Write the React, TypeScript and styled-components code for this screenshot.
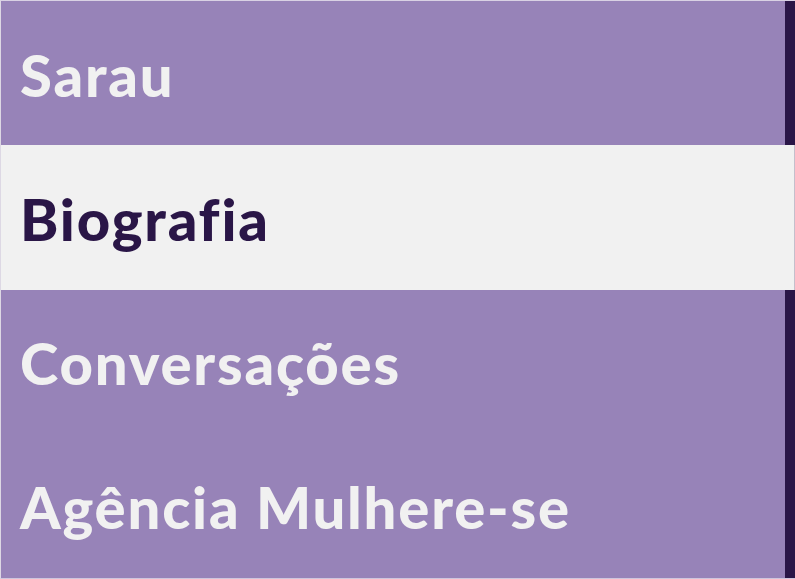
import React from "react";
import styled, { createGlobalStyle } from "styled-components";

const Global = createGlobalStyle`
  html, body { margin: 0; padding: 0; }
  body { background: #f1f1f1; }
  * { box-sizing: border-box; }
`;

const Menu = styled.nav`
  display: flex;
  flex-direction: column;
  width: 795px;
  height: 579px;
  border-top: 1px solid #d9d2e4;
  border-left: 1px solid #ddd8e4;
  border-bottom: 1px solid #cfc6dd;
  background: #9783b8;
  font-family: Lato, "Open Sans", sans-serif;
`;

const Item = styled.a<{ $active?: boolean }>`
  flex: 1 1 0;
  display: flex;
  align-items: center;
  padding-left: 19px;
  padding-top: 2px;
  text-decoration: none;
  font-weight: 900;
  font-size: 58px;
  letter-spacing: 1.8px;
  background: ${(p) => (p.$active ? "#f1f1f1" : "#9783b8")};
  color: ${(p) => (p.$active ? "#2a1647" : "#f1f1f1")};
  border-right: ${(p) => (p.$active ? "1px solid #c4bfcc" : "10px solid #2a1647")};
`;

const items = ["Sarau", "Biografia", "Conversações", "Agência Mulhere-se"];

export default function App() {
  return (
    <>
      <Global />
      <Menu>
        {items.map((t) => (
          <Item key={t} href="#" $active={t === "Biografia"}>
            {t}
          </Item>
        ))}
      </Menu>
    </>
  );
}
